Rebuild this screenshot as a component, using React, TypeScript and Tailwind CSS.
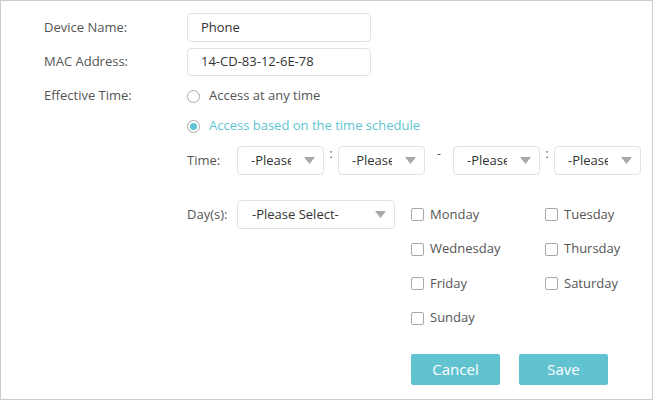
import React from "react";

const font = { fontFamily: '"Open Sans", "Noto Sans", Arial, sans-serif' };

function Arrow() {
  return (
    <svg width="11" height="7" viewBox="0 0 11 7" className="shrink-0">
      <path d="M0 0 H11 L5.5 7 Z" fill="#a9a9a9" />
    </svg>
  );
}

function SmallSelect() {
  return (
    <div className="flex h-[29px] w-[87px] items-center rounded-[4px] border border-[#e2e2e2] bg-white pl-[13px] pr-[8px]">
      <span className="block w-[40px] overflow-hidden whitespace-nowrap text-[13px] text-[#333]">-Please Select-</span>
      <div className="ml-auto">
        <Arrow />
      </div>
    </div>
  );
}

function Sep({ ch }: { ch: string }) {
  return (
    <div className="flex h-[29px] items-start justify-center pt-[1px] text-[12px] leading-[14px] text-[#555]">{ch}</div>
  );
}

function Checkbox({ label }: { label: string }) {
  return (
    <div className="flex h-[29px] items-center">
      <div className="h-[13px] w-[13px] rounded-[2px] border border-[#a9a9a9] bg-white" />
      <span className="ml-[6px] text-[13px] text-[#555]">{label}</span>
    </div>
  );
}

export default function App() {
  return (
    <div style={font} className="h-[400px] w-[653px] border border-[#cccccc] bg-white">
      <div className="pl-[43px] pt-[12px]">
        {/* Device Name */}
        <div className="flex h-[29px] items-center">
          <div className="w-[143px] text-[13px] text-[#555]">Device Name:</div>
          <div className="flex h-[29px] w-[184px] items-center rounded-[4px] border border-[#e2e2e2] pl-[13px] text-[13px] text-[#333]">Phone</div>
        </div>
        {/* MAC */}
        <div className="mt-[6px] flex h-[28px] items-center">
          <div className="w-[143px] text-[13px] text-[#555]">MAC Address:</div>
          <div className="flex h-[28px] w-[184px] items-center rounded-[4px] border border-[#e2e2e2] pl-[13px] text-[13px] text-[#333]">14-CD-83-12-6E-78</div>
        </div>
        {/* Effective Time */}
        <div className="mt-[8px] flex h-[24px] items-center">
          <div className="w-[143px] text-[13px] text-[#555]">Effective Time:</div>
          <div className="flex items-center">
            <div className="h-[13px] w-[13px] rounded-full border border-[#a9a9a9] bg-white" />
            <span className="ml-[9px] text-[13px] text-[#555]">Access at any time</span>
          </div>
        </div>
        <div className="mt-[6px] flex h-[24px] items-center">
          <div className="w-[143px]" />
          <div className="flex items-center">
            <div className="flex h-[13px] w-[13px] items-center justify-center rounded-full border border-[#a9a9a9] bg-white">
              <div className="h-[7px] w-[7px] rounded-full bg-[#5ec4d2]" />
            </div>
            <span className="ml-[9px] text-[13px] text-[#5ec4d2]">Access based on the time schedule</span>
          </div>
        </div>
        {/* Time */}
        <div className="mt-[8px] flex h-[29px] items-center">
          <div className="w-[143px]" />
          <div className="w-[50px] text-[13px] text-[#555]">Time:</div>
          <SmallSelect />
          <div className="w-[14px]"><Sep ch=":" /></div>
          <SmallSelect />
          <div className="w-[28px]"><Sep ch="-" /></div>
          <SmallSelect />
          <div className="w-[14px]"><Sep ch=":" /></div>
          <SmallSelect />
        </div>
        {/* Days */}
        <div className="mt-[25px] flex items-start">
          <div className="w-[143px]" />
          <div className="flex h-[29px] w-[50px] items-center text-[13px] text-[#555]">Day(s):</div>
          <div className="flex h-[29px] w-[158px] items-center rounded-[4px] border border-[#e2e2e2] pl-[14px] pr-[8px] text-[13px] text-[#333]">
            <span>-Please Select-</span>
            <div className="ml-auto">
              <Arrow />
            </div>
          </div>
          <div className="ml-[16px] flex flex-col">
            <div className="grid grid-cols-[134px_100px] gap-y-[5.5px]">
              <Checkbox label="Monday" />
              <Checkbox label="Tuesday" />
              <Checkbox label="Wednesday" />
              <Checkbox label="Thursday" />
              <Checkbox label="Friday" />
              <Checkbox label="Saturday" />
              <Checkbox label="Sunday" />
            </div>
            <div className="mt-[21px] flex gap-[19px]">
              <button className="h-[31px] w-[89px] rounded-[2px] bg-[#62c3d0] text-[15px] text-white">Cancel</button>
              <button className="h-[31px] w-[89px] rounded-[2px] bg-[#62c3d0] text-[15px] text-white">Save</button>
            </div>
          </div>
        </div>
      </div>
    </div>
  );
}
